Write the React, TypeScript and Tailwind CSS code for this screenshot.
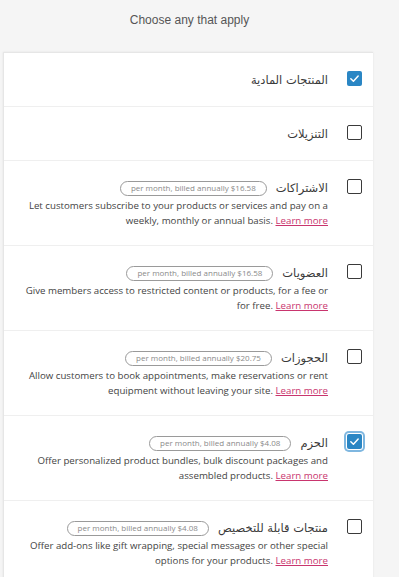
import React from "react";

type Item = {
  title: string;
  checked: boolean;
  focus?: boolean;
  price?: string;
  desc?: string;
};

const items: Item[] = [
  { title: "المنتجات المادية", checked: true },
  { title: "التنزيلات", checked: false },
  {
    title: "الاشتراكات",
    checked: false,
    price: "$16.58",
    desc: "Let customers subscribe to your products or services and pay on a weekly, monthly or annual basis.",
  },
  {
    title: "العضويات",
    checked: false,
    price: "$16.58",
    desc: "Give members access to restricted content or products, for a fee or for free.",
  },
  {
    title: "الحجوزات",
    checked: false,
    price: "$20.75",
    desc: "Allow customers to book appointments, make reservations or rent equipment without leaving your site.",
  },
  {
    title: "الحزم",
    checked: true,
    focus: true,
    price: "$4.08",
    desc: "Offer personalized product bundles, bulk discount packages and assembled products.",
  },
  {
    title: "منتجات قابلة للتخصيص",
    checked: false,
    price: "$4.08",
    desc: "Offer add-ons like gift wrapping, special messages or other special options for your products.",
  },
];

function Box({ checked, focus }: { checked: boolean; focus?: boolean }) {
  if (checked) {
    return (
      <div
        className={
          "w-[15px] h-[15px] shrink-0 rounded-[2px] bg-[#2a86c4] flex items-center justify-center " +
          (focus ? "ring-2 ring-[#7fb7e0] ring-offset-1 ring-offset-white" : "")
        }
      >
        <svg width="11" height="11" viewBox="0 0 12 12" fill="none">
          <path d="M2 6.3 L4.8 9 L10 3.2" stroke="white" strokeWidth="1.6" strokeLinecap="round" strokeLinejoin="round" />
        </svg>
      </div>
    );
  }
  return <div className="w-[15px] h-[15px] shrink-0 rounded-[2px] border border-[#3a3a3a] bg-white" />;
}

export default function App() {
  return (
    <div className="w-[399px] h-[577px] overflow-hidden bg-[#f5f5f5]" style={{ fontFamily: '"Open Sans", "DejaVu Sans", sans-serif' }}>
      <div className="h-[52px] flex justify-center pt-[11px] pr-[20px]">
        <span className="text-[12px] text-[#555] leading-[18px]" style={{ fontFamily: '"Liberation Sans", Arial, sans-serif' }}>
          Choose any that apply
        </span>
      </div>
      <div className="ml-[3px] w-[370px] bg-white border-l border-t border-[#e6e6e6] shadow-[0_0_2px_rgba(0,0,0,0.08)]" dir="rtl">
        {items.map((it, i) => (
          <div
            key={i}
            className={
              "flex items-start pr-[11px] pl-[14px] pt-[18px] pb-[17px]" +
              (i < items.length - 1 ? " border-b border-[#efefef]" : "")
            }
          >
            <div>
              <Box checked={it.checked} focus={it.focus} />
            </div>
            <div className="mr-[19px] flex-1 min-w-0">
              <div className="flex items-center gap-[9px] h-[18px]">
                <span className="text-[11.5px] text-[#3a3a3a] leading-[18px] h-[18px] whitespace-nowrap" style={{ fontFamily: '"DejaVu Sans", sans-serif' }}>
                  {it.title}
                </span>
                {it.price && (
                  <span
                    dir="ltr"
                    className="rounded-full border border-[#9a9a9a] px-[10px] h-[15px] flex items-center text-[8px] text-[#8a8a8a] leading-none whitespace-nowrap"
                  >
                    per month, billed annually {it.price}
                  </span>
                )}
              </div>
              {it.desc && (
                <p dir="ltr" className="text-right text-[9.7px] leading-[15px] h-[30px] text-[#444] mt-[1px]">
                  {it.desc}{" "}
                  <a className="text-[#c9356e] underline underline-offset-[1px]">Learn more</a>
                </p>
              )}
            </div>
          </div>
        ))}
      </div>
    </div>
  );
}
